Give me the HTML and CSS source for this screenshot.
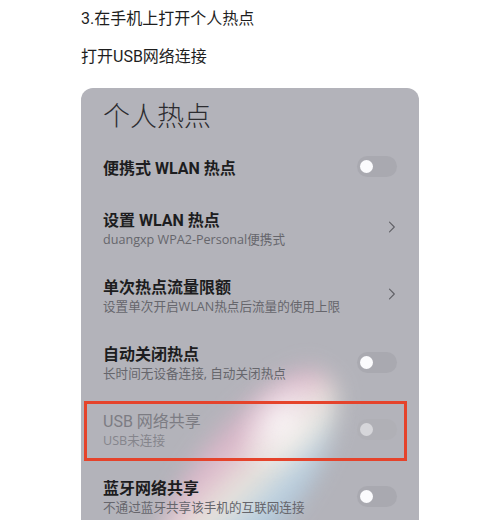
FILE: index.html
```html
<!DOCTYPE html>
<html lang="zh-CN">
<head>
<meta charset="utf-8">
<title>个人热点</title>
<link rel="stylesheet" href="styles.css">
</head>
<body>
<div class="page">
  <p class="step">3.在手机上打开个人热点</p>
  <p class="step step2">打开USB网络连接</p>
  <div class="card">
    <div class="glare"></div>
    <div class="glare glare2"></div>
    <h1 class="card-title">个人热点</h1>
    <div class="row row-first">
      <div class="texts"><div class="t">便携式 WLAN 热点</div></div>
      <div class="toggle"><span class="knob"></span></div>
    </div>
    <div class="row">
      <div class="texts"><div class="t">设置 WLAN 热点</div><div class="s">duangxp WPA2-Personal便携式</div></div>
      <svg class="chev" width="8" height="12" viewBox="0 0 8 12"><path d="M1.5 1.2 L6.3 6 L1.5 10.8" fill="none" stroke="#606066" stroke-width="1.1" stroke-linecap="round" stroke-linejoin="round"/></svg>
    </div>
    <div class="row">
      <div class="texts"><div class="t">单次热点流量限额</div><div class="s">设置单次开启WLAN热点后流量的使用上限</div></div>
      <svg class="chev" width="8" height="12" viewBox="0 0 8 12"><path d="M1.5 1.2 L6.3 6 L1.5 10.8" fill="none" stroke="#606066" stroke-width="1.1" stroke-linecap="round" stroke-linejoin="round"/></svg>
    </div>
    <div class="row">
      <div class="texts"><div class="t">自动关闭热点</div><div class="s">长时间无设备连接, 自动关闭热点</div></div>
      <div class="toggle"><span class="knob"></span></div>
    </div>
    <div class="row disabled">
      <div class="texts"><div class="t">USB 网络共享</div><div class="s">USB未连接</div></div>
      <div class="toggle"><span class="knob"></span></div>
    </div>
    <div class="row">
      <div class="texts"><div class="t">蓝牙网络共享</div><div class="s">不通过蓝牙共享该手机的互联网连接</div></div>
      <div class="toggle"><span class="knob"></span></div>
    </div>
    <div class="highlight"></div>
  </div>
</div>
</body>
</html>
```
FILE: styles.css
```css
html, body {
  margin: 0;
  padding: 0;
  background: #ffffff;
}
body {
  font-family: Roboto, "Noto Sans CJK SC", sans-serif;
  color: #1c1c1c;
  height: 521px;
  overflow: hidden;
}
.page {
  padding: 7px 0 0 81px;
}
.step {
  margin: 0;
  font-size: 16px;
  line-height: 24px;
  color: #1e1e1e;
}
.step2 {
  margin-top: 14px;
}
.card {
  position: relative;
  margin-top: 19px;
  width: 338px;
  height: 432px;
  background: #b3b3ba;
  border-radius: 12px 12px 0 0;
  overflow: hidden;
  padding: 0 22px;
  box-sizing: border-box;
}
.card-title {
  position: relative;
  margin: 0;
  padding: 11px 0 9px 0;
  font-size: 27px;
  line-height: 32px;
  font-weight: 300;
  color: #2c2c30;
  font-family: "Noto Sans CJK SC", sans-serif;
}
.row {
  position: relative;
  display: flex;
  align-items: center;
  justify-content: space-between;
  height: 67px;
}
.row-first {
  height: 56px;
}
.texts {
  display: flex;
  flex-direction: column;
}
.t {
  font-size: 16px;
  line-height: 19px;
  font-weight: 700;
  color: #1d1d20;
}
.s {
  font-family: "Open Sans", "Noto Sans CJK SC", sans-serif;
  font-size: 12.6px;
  line-height: 18px;
  color: #66666c;
  margin-top: 1px;
}
.toggle {
  width: 40px;
  height: 21px;
  border-radius: 11px;
  background: #a9a9b0;
  display: flex;
  align-items: center;
  padding-left: 3px;
  box-sizing: border-box;
  margin-top: -3px;
}
.knob {
  width: 13px;
  height: 13px;
  border-radius: 50%;
  background: #fbfbfd;
}
.chev {
  margin-right: 1px;
  margin-top: -5px;
}
.disabled .t {
  font-weight: 400;
  color: #7c7c83;
}
.disabled .s {
  color: #85858c;
}
.disabled .toggle {
  background: #b0b0b6;
}
.disabled .knob {
  background: #d6d6da;
}
.highlight {
  position: absolute;
  left: 3px;
  top: 313px;
  width: 323px;
  height: 60px;
  border: 3px solid #e5432b;
  box-sizing: border-box;
  pointer-events: none;
}
.glare {
  position: absolute;
  left: 110px;
  top: 260px;
  width: 110px;
  height: 270px;
  border-radius: 50%;
  background: linear-gradient(100deg,
    rgba(255,255,255,0) 0%,
    rgba(255,185,215,0.55) 26%,
    rgba(255,250,235,0.7) 50%,
    rgba(180,225,255,0.55) 74%,
    rgba(255,255,255,0) 100%);
  filter: blur(11px);
  transform: rotate(36deg);
  pointer-events: none;
}
.glare2 {
  left: 160px;
  top: 280px;
  width: 80px;
  height: 110px;
  background: radial-gradient(ellipse at center, rgba(255,255,255,0.8), rgba(255,255,255,0) 70%);
  filter: blur(8px);
  transform: rotate(36deg);
}
```
